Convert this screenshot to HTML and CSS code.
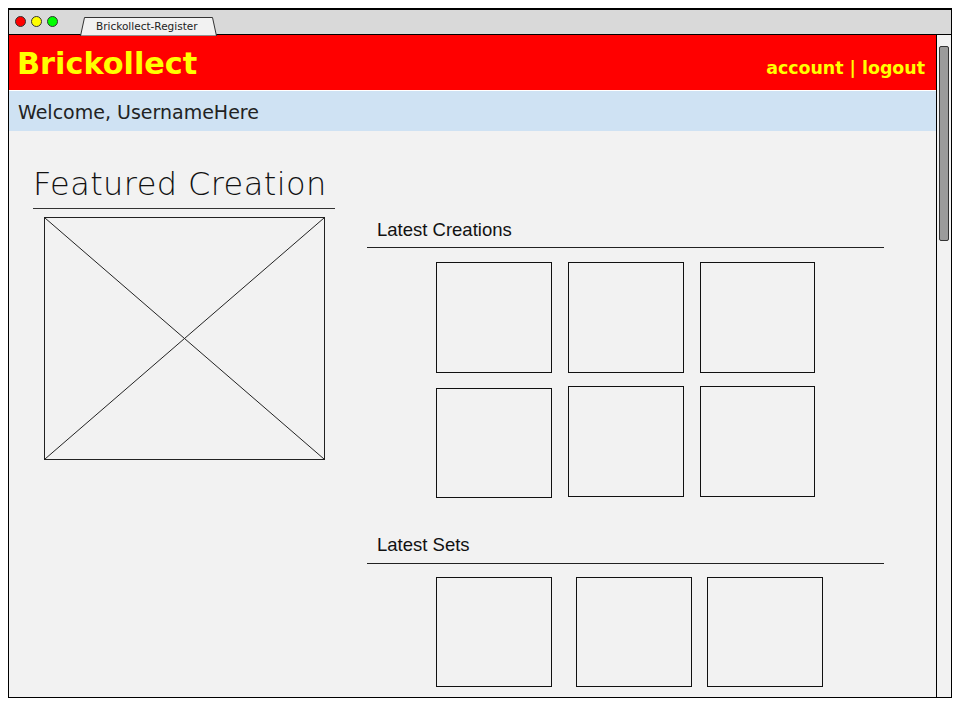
FILE: index.html
```html
<!DOCTYPE html>
<html lang="en">
<head>
<meta charset="utf-8">
<title>Brickollect-Register</title>
<link rel="stylesheet" href="styles.css">
</head>
<body>
<div class="window">
  <div class="tabbar">
    <div class="lights">
      <span class="light red"></span>
      <span class="light yellow"></span>
      <span class="light green"></span>
    </div>
    <div class="tab">
      <svg class="tab-shape" width="137" height="19" viewBox="0 0 137 19"><polygon points="0.5,19 4.5,0.5 132.5,0.5 136.5,19" fill="#f2f2f2" stroke="#333" stroke-width="1"/></svg>
      <span class="tab-title">Brickollect-Register</span>
    </div>
  </div>
  <div class="main">
    <div class="page">
      <header class="header">
        <div class="brand">Brickollect</div>
        <nav class="nav">account | logout</nav>
      </header>
      <div class="welcome">Welcome, UsernameHere</div>
      <div class="content">
        <section class="featured">
          <h1 class="featured-title">Featured Creation</h1>
          <div class="placeholder">
            <svg width="100%" height="100%" viewBox="0 0 100 100" preserveAspectRatio="none"><line x1="0" y1="0" x2="100" y2="100" stroke="#222" stroke-width="1" vector-effect="non-scaling-stroke"/><line x1="100" y1="0" x2="0" y2="100" stroke="#222" stroke-width="1" vector-effect="non-scaling-stroke"/></svg>
          </div>
        </section>
        <section class="latest">
          <h2 class="section-title">Latest Creations</h2>
          <div class="row first-row">
            <div class="box"></div>
            <div class="box gap16"></div>
            <div class="box gap16 narrow"></div>
          </div>
          <div class="row second-row">
            <div class="box low"></div>
            <div class="box gap16"></div>
            <div class="box gap16 narrow"></div>
          </div>
          <h2 class="section-title sets-title">Latest Sets</h2>
          <div class="row sets-row">
            <div class="box set"></div>
            <div class="box set gap24"></div>
            <div class="box set gap15"></div>
          </div>
        </section>
      </div>
    </div>
    <div class="scrollbar"><div class="thumb"></div></div>
  </div>
</div>
</body>
</html>
```

FILE: styles.css
```css
* { box-sizing: border-box; }
html, body { margin: 0; padding: 0; background: #ffffff; }
body { font-family: "DejaVu Sans", sans-serif; }

.window {
  margin: 8px 0 0 8px;
  width: 944px;
  height: 690px;
  border: 1px solid #000;
  border-top-width: 2px;
  display: flex;
  flex-direction: column;
  overflow: hidden;
}

.tabbar {
  height: 25px;
  flex: none;
  background: #d9d9d9;
  border-bottom: 1px solid #000;
  display: flex;
  align-items: flex-end;
  padding-left: 6px;
}
.lights {
  display: flex;
  gap: 5px;
  align-self: flex-start;
  margin-top: 6px;
}
.light {
  width: 11px;
  height: 11px;
  border-radius: 50%;
  border: 1px solid #333;
}
.red { background: #ff0000; }
.yellow { background: #ffff00; }
.green { background: #00ff00; }

.tab {
  position: relative;
  width: 137px;
  height: 18px;
  margin-left: 22px;
  margin-bottom: -1px;
}
.tab-shape { position: absolute; left: 0; top: 0; }
.tab-title {
  position: relative;
  display: block;
  padding-left: 16px;
  font-size: 10.5px;
  line-height: 19px;
  color: #222;
}

.main {
  flex: 1;
  display: flex;
  min-height: 0;
}
.page {
  width: 927px;
  background: #f2f2f2;
  display: flex;
  flex-direction: column;
}
.scrollbar {
  width: 15px;
  border-left: 1px solid #000;
  background: #f2f2f2;
  padding: 11px 0 0 2px;
}
.thumb {
  width: 10px;
  height: 195px;
  background: #9b9b9b;
  border: 1px solid #333;
  border-radius: 2px;
}

.header {
  height: 56px;
  background: #ff0000;
  border-bottom: 1px solid #ffffff;
  display: flex;
  justify-content: space-between;
  align-items: baseline;
  padding: 12px 11px 0 8px;
}
.brand {
  color: #ffff00;
  font-weight: bold;
  font-size: 30.3px;
  line-height: 34px;
}
.nav {
  color: #ffff00;
  font-weight: bold;
  font-size: 17.4px;
}

.welcome {
  height: 40px;
  background: #cfe2f3;
  padding: 2px 0 0 9px;
  font-size: 19px;
  line-height: 38px;
  color: #222;
}

.content {
  flex: 1;
  display: flex;
  align-items: flex-start;
  padding-left: 24px;
}

.featured {
  width: 302px;
  padding-top: 33px;
}
.featured-title {
  margin: 0;
  font-size: 32px;
  font-weight: 300;
  letter-spacing: 0.4px;
  line-height: 40px;
  padding-bottom: 4px;
  border-bottom: 1px solid #333;
  color: #111;
}
.placeholder {
  margin: 8px 0 0 11px;
  width: 281px;
  height: 243px;
  border: 1px solid #222;
}
.placeholder svg { display: block; }

.latest {
  width: 517px;
  margin-left: 32px;
  padding-top: 88px;
}
.section-title {
  margin: 0;
  font-family: "Liberation Sans", Arial, sans-serif;
  font-weight: normal;
  font-size: 18.5px;
  line-height: 22px;
  padding: 0 0 6px 10px;
  border-bottom: 1px solid #222;
  color: #111;
}
.row {
  display: flex;
  align-items: flex-start;
  padding-left: 69px;
}
.first-row { margin-top: 14px; }
.second-row { margin-top: 13px; }
.sets-title { margin-top: 36px; padding-bottom: 7px; }
.sets-row { margin-top: 13px; }

.box {
  width: 116px;
  height: 111px;
  border: 1px solid #111;
}
.box.narrow { width: 115px; }
.box.low { margin-top: 2px; height: 110px; }
.box.set { height: 110px; }
.gap16 { margin-left: 16px; }
.gap24 { margin-left: 24px; }
.gap15 { margin-left: 15px; }
```
